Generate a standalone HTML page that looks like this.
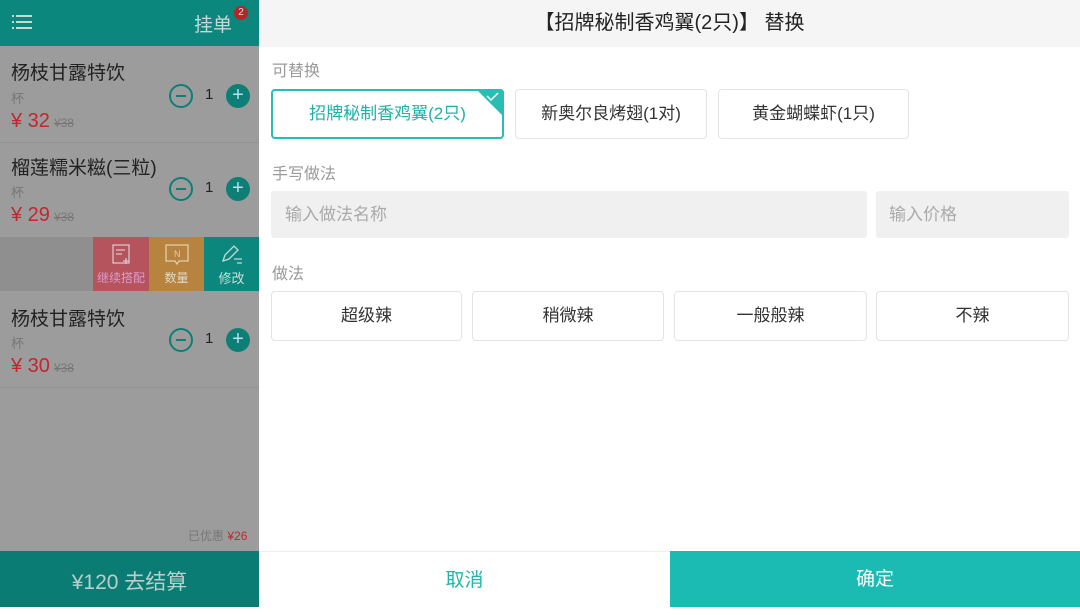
<!DOCTYPE html><html><head><meta charset="utf-8"><style>
*{margin:0;padding:0;box-sizing:border-box}
body{width:1080px;height:607px;overflow:hidden;font-family:"Liberation Sans","Noto Sans CJK SC",sans-serif;position:relative;background:#fff}
.a{position:absolute}
.L{left:0;top:0;width:259px;height:607px;background:#9c9c9c}
.name{font-size:19px;color:#222;left:11px}
.unit{font-size:13px;color:#777;left:11px}
.price{font-size:20px;color:#c2262e;left:11px}
.price small{font-size:12px;color:#777;text-decoration:line-through;margin-left:4px}
.minus{width:24px;height:24px;border:2px solid #0d7f77;border-radius:50%;left:169px}
.minus:after{content:"";position:absolute;left:5px;top:9px;width:10px;height:2px;background:#0d7f77}
.plus{width:24px;height:24px;background:#0d7f77;border-radius:50%;left:226px;color:#bde;text-align:center;line-height:23px;font-size:20px}
.q{left:205px;font-size:15px;color:#222}
.btn{border:1px solid #e4e4e4;border-radius:4px;background:#fff;font-size:17px;color:#333;text-align:center;line-height:48px;height:50px}
.lbl{font-size:16px;color:#999;left:272px}
</style></head><body>
<div class="a L"></div>
<div class="a" style="left:0;top:0;width:259px;height:46px;background:#0c877e"></div>
<svg class="a" style="left:12px;top:14px" width="20" height="16"><g fill="#c6d9d6"><rect x="0" y="1" width="2" height="2"/><rect x="4" y="1" width="16" height="2"/><rect x="0" y="7" width="2" height="2"/><rect x="4" y="7" width="16" height="2"/><rect x="0" y="13" width="2" height="2"/><rect x="4" y="13" width="16" height="2"/></g></svg>
<div class="a" style="left:194px;top:10px;font-size:19px;color:#c6d9d6">挂单</div>
<div class="a" style="left:234px;top:6px;width:14px;height:14px;border-radius:50%;background:#b3262a;color:#ddd;font-size:10px;text-align:center;line-height:14px">2</div>
<div class="a name" style="top:58px">杨枝甘露特饮</div>
<div class="a unit" style="top:88px">杯</div>
<div class="a price" style="top:110px">¥ 32<small>¥38</small></div>
<div class="a minus" style="top:84px"></div><div class="a q" style="top:86px">1</div><div class="a plus" style="top:84px">+</div>
<div class="a" style="left:0;top:142px;width:259px;height:1px;background:#929292"></div>
<div class="a name" style="top:153px">榴莲糯米糍(三粒)</div>
<div class="a unit" style="top:182px">杯</div>
<div class="a price" style="top:204px">¥ 29<small>¥38</small></div>
<div class="a minus" style="top:177px"></div><div class="a q" style="top:179px">1</div><div class="a plus" style="top:177px">+</div>
<div class="a" style="left:0;top:237px;width:93px;height:54px;background:#8f8f8f"></div>
<div class="a" style="left:93px;top:237px;width:56px;height:54px;background:#b5545d;color:#d9c;font-size:12px;text-align:center;padding-top:32px">继续搭配</div>
<div class="a" style="left:149px;top:237px;width:55px;height:54px;background:#b8823f;color:#ddc;font-size:12px;text-align:center;padding-top:32px">数量</div>
<div class="a" style="left:204px;top:237px;width:55px;height:54px;background:#0c877e;color:#cdd;font-size:13px;text-align:center;padding-top:31px">修改</div>
<svg class="a" style="left:112px;top:244px" width="20" height="22" fill="none" stroke="#d9c4c8" stroke-width="1.3"><rect x="1" y="1" width="16" height="18"/><path d="M4 6h9M4 10h6M14 14v6M11 17h6"/></svg>
<svg class="a" style="left:165px;top:244px" width="24" height="22" fill="none" stroke="#e0cfb0" stroke-width="1.3"><path d="M1 1h22v16H14l-2 3-2-3H1z"/><text x="9" y="13" font-size="9" fill="#e0cfb0" stroke="none">N</text></svg>
<svg class="a" style="left:220px;top:243px" width="24" height="22" fill="none" stroke="#c6d9d6" stroke-width="1.3"><path d="M3 18l2-6L14 3l4 4-9 9z M14 16h8M17 20h5"/></svg>
<div class="a name" style="top:304px">杨枝甘露特饮</div>
<div class="a unit" style="top:333px">杯</div>
<div class="a price" style="top:355px">¥ 30<small>¥38</small></div>
<div class="a minus" style="top:328px"></div><div class="a q" style="top:330px">1</div><div class="a plus" style="top:328px">+</div>
<div class="a" style="left:0;top:387px;width:259px;height:1px;background:#929292"></div>
<div class="a" style="left:188px;top:527px;font-size:12px;color:#777">已优惠 <span style="color:#c2262e">¥26</span></div>
<div class="a" style="left:0;top:551px;width:259px;height:56px;background:#0b7c74;color:#b8cfcc;font-size:21px;text-align:center;line-height:64px">¥120 去结算</div>

<div class="a" style="left:259px;top:0;width:821px;height:47px;background:#f5f5f5;text-align:center;font-size:20px;line-height:46px;color:#222">【招牌秘制香鸡翼(2只)】 替换</div>
<div class="a lbl" style="top:57px">可替换</div>
<div class="a btn" style="left:271px;top:89px;width:233px;border:2px solid #29bdb4;color:#1fb1a8;line-height:46px">招牌秘制香鸡翼(2只)</div>
<svg class="a" style="left:476px;top:89px" width="28" height="28"><path d="M0 0H24Q28 0 28 4V28Z" fill="#29bdb4"/><path d="M11 7l4 4 7-7" stroke="#fff" stroke-width="1.5" fill="none"/></svg>
<div class="a btn" style="left:515px;top:89px;width:192px">新奥尔良烤翅(1对)</div>
<div class="a btn" style="left:718px;top:89px;width:191px">黄金蝴蝶虾(1只)</div>
<div class="a lbl" style="top:160px">手写做法</div>
<div class="a" style="left:271px;top:191px;width:596px;height:47px;background:#f0f0f0;border-radius:3px;font-size:17px;color:#aaa;padding-left:14px;line-height:47px">输入做法名称</div>
<div class="a" style="left:876px;top:191px;width:193px;height:47px;background:#f0f0f0;border-radius:3px;font-size:17px;color:#aaa;padding-left:13px;line-height:47px">输入价格</div>
<div class="a lbl" style="top:260px">做法</div>
<div class="a btn" style="left:271px;top:291px;width:191px">超级辣</div>
<div class="a btn" style="left:472px;top:291px;width:192px">稍微辣</div>
<div class="a btn" style="left:674px;top:291px;width:193px">一般般辣</div>
<div class="a btn" style="left:876px;top:291px;width:193px">不辣</div>
<div class="a" style="left:259px;top:551px;width:411px;height:56px;border-top:1px solid #eee;color:#21b5ab;font-size:19px;text-align:center;line-height:57px">取消</div>
<div class="a" style="left:670px;top:551px;width:410px;height:56px;background:#1bbab2;color:#fff;font-size:19px;text-align:center;line-height:58px">确定</div>
</body></html>
